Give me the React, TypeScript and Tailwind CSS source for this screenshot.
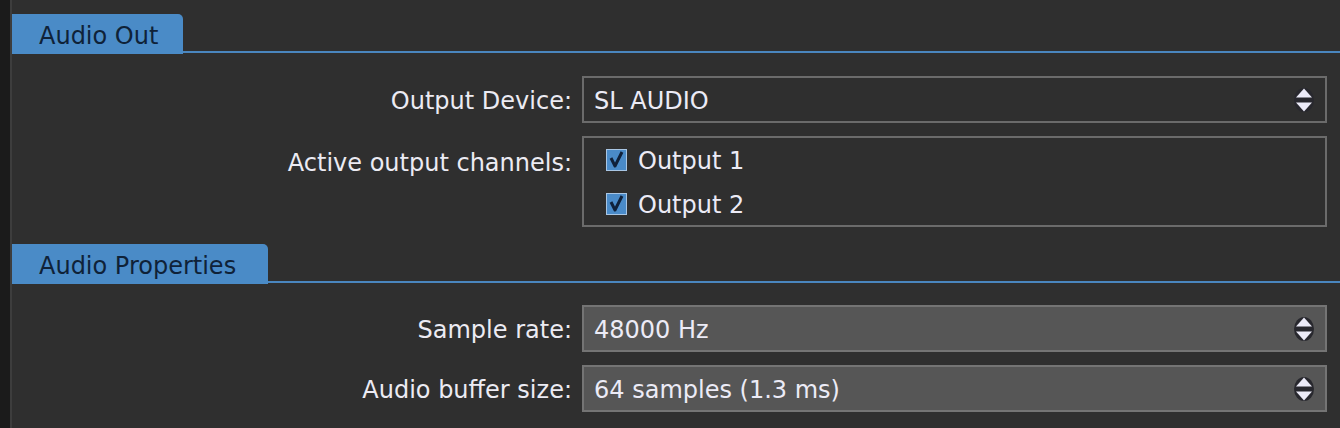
import React from "react";

const font = { fontFamily: '"DejaVu Sans", "Noto Sans", sans-serif' };

function Arrows() {
  return (
    <svg width="22" height="26" viewBox="0 0 22 26" className="shrink-0">
      <ellipse cx="11" cy="13" rx="10" ry="12" fill="#28282e" />
      <polygon points="11,1.5 19,10.5 3,10.5" fill="#ecebf8" />
      <polygon points="3,15.5 19,15.5 11,24.5" fill="#ecebf8" />
    </svg>
  );
}

function Check() {
  return (
    <svg width="21" height="22" viewBox="0 0 21 22" className="shrink-0">
      <rect x="0.5" y="0.5" width="20" height="21" fill="#4a8bc9" stroke="#a9c6e4" />
      <path d="M5 9 L9 17 L16 3" fill="none" stroke="#10213a" strokeWidth="3" strokeLinejoin="round" />
    </svg>
  );
}

function Tab({ label, width }: { label: string; width: string }) {
  return (
    <div className="flex items-end">
      <div
        className={`${width} h-[40px] bg-[#4a8bc7] rounded-tr-[5px] pl-[27px] pt-[3px] flex items-center text-[24px] text-[#0f2238]`}
      >
        {label}
      </div>
      <div className="flex-1 h-[2px] bg-[#4a86bf] mb-[1px]" />
    </div>
  );
}

function Select({ value, filled }: { value: string; filled?: boolean }) {
  return (
    <div
      className={`w-[745px] h-[47px] border-2 ${
        filled ? "bg-[#565656] border-[#747474]" : "bg-[#2f2f2f] border-[#6b6b6b]"
      } flex items-center justify-between pl-[10px] pr-[10px] text-[24px] text-[#ecebf6]`}
    >
      <span className="pt-[2px]">{value}</span>
      <Arrows />
    </div>
  );
}

function Label({ children, className = "" }: { children: React.ReactNode; className?: string }) {
  return (
    <div className={`w-[560px] text-right text-[24px] text-[#ecebf3] ${className}`}>{children}</div>
  );
}

export default function App() {
  return (
    <div className="w-[1340px] h-[428px] bg-[#2f2f2f] flex overflow-hidden" style={font}>
      <div className="w-[10px] bg-[#1b1b1b]" />
      <div className="w-[2px] bg-[#3d3d3d]" />
      <div className="flex-1 flex flex-col pt-[14px]">
        <Tab label="Audio Out" width="w-[171px]" />
        <div className="flex flex-col gap-[13px] mt-[22px]">
          <div className="flex items-center">
            <Label className="pt-[2px]">Output Device:</Label>
            <div className="ml-[10px]">
              <Select value="SL AUDIO" />
            </div>
          </div>
          <div className="flex items-start">
            <Label className="mt-[9px]">Active output channels:</Label>
            <div className="ml-[10px] w-[745px] h-[91px] border-2 border-[#6b6b6b] flex flex-col pl-[22px] pt-[11px] gap-[22px] text-[24px] text-[#ecebf6]">
              <div className="flex items-center gap-[11px] h-[22px]">
                <Check />
                <span className="pt-[1px]">Output 1</span>
              </div>
              <div className="flex items-center gap-[11px] h-[22px]">
                <Check />
                <span className="pt-[1px]">Output 2</span>
              </div>
            </div>
          </div>
        </div>
        <div className="mt-[17px]">
          <Tab label="Audio Properties" width="w-[256px]" />
        </div>
        <div className="flex flex-col gap-[13px] mt-[21px]">
          <div className="flex items-center">
            <Label className="pt-[2px]">Sample rate:</Label>
            <div className="ml-[10px]">
              <Select value="48000 Hz" filled />
            </div>
          </div>
          <div className="flex items-center">
            <Label className="pt-[2px]">Audio buffer size:</Label>
            <div className="ml-[10px]">
              <Select value="64 samples (1.3 ms)" filled />
            </div>
          </div>
        </div>
      </div>
    </div>
  );
}
